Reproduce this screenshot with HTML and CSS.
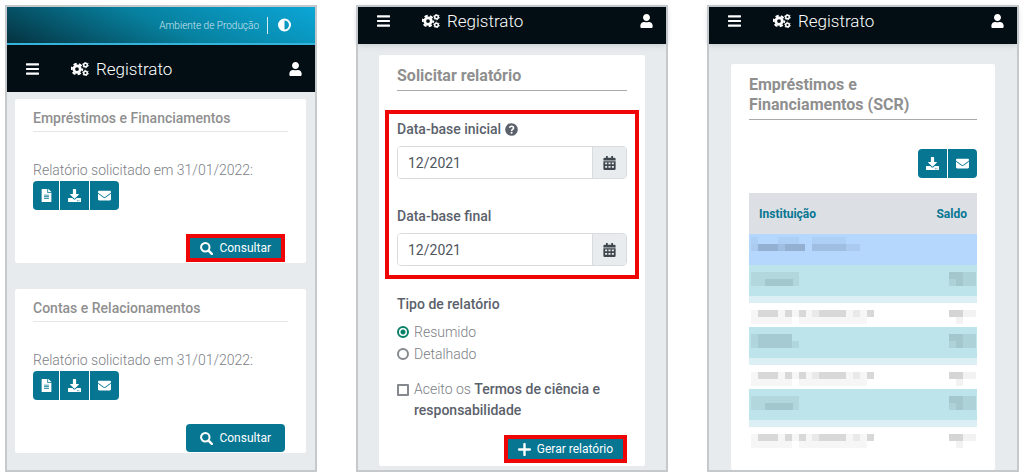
FILE: index.html
```html
<!DOCTYPE html>
<html lang="pt-BR">
<head>
    <meta charset="UTF-8">
    <title>Registrato</title>
    <meta name="viewport" content="width=device-width, initial-scale=1.0">
    <link rel="stylesheet" href="styles.css">
</head>
<body>
    <svg class="sprite" aria-hidden="true">
        <symbol id="bars" viewBox="0 36 448 440"><path d="M16 132h416c9 0 16-7 16-16V76c0-9-7-16-16-16H16C7 60 0 67 0 76v40c0 9 7 16 16 16zm0 160h416c9 0 16-7 16-16v-40c0-9-7-16-16-16H16c-9 0-16 7-16 16v40c0 9 7 16 16 16zm0 160h416c9 0 16-7 16-16v-40c0-9-7-16-16-16H16c-9 0-16 7-16 16v40c0 9 7 16 16 16z"/></symbol>
        <symbol id="user" viewBox="0 0 448 512"><path d="M224 256c71 0 128-57 128-128S295 0 224 0 96 57 96 128s57 128 128 128zm90 32h-17c-45 20-101 20-146 0h-17C60 288 0 348 0 422v42c0 26 21 48 48 48h352c27 0 48-22 48-48v-42c0-74-60-134-134-134z"/></symbol>
        <symbol id="cogs" viewBox="0 0 36 28">
            <circle cx="12" cy="14" r="6.5" fill="none" stroke="currentColor" stroke-width="5.5"/>
            <circle cx="12" cy="14" r="10.5" fill="none" stroke="currentColor" stroke-width="4" stroke-dasharray="6.4 4.6" stroke-dashoffset="2.8"/>
            <circle cx="29" cy="6" r="3.6" fill="none" stroke="currentColor" stroke-width="3"/>
            <circle cx="29" cy="6" r="5.6" fill="none" stroke="currentColor" stroke-width="2" stroke-dasharray="3 2.86"/>
            <circle cx="29" cy="22" r="3.6" fill="none" stroke="currentColor" stroke-width="3"/>
            <circle cx="29" cy="22" r="5.6" fill="none" stroke="currentColor" stroke-width="2" stroke-dasharray="3 2.86"/>
        </symbol>
        <symbol id="contrast" viewBox="1 1 14 14"><path fill-rule="evenodd" d="M8 1a7 7 0 1 0 0 14A7 7 0 0 0 8 1zm0 2.200v9.600a4.800 4.800 0 0 1 0-9.600z" transform="rotate(180 8 8)"/></symbol>
        <symbol id="file" viewBox="0 0 384 512"><path fill-rule="evenodd" d="M224 136V0H24C11 0 0 11 0 24v464c0 13 11 24 24 24h336c13 0 24-11 24-24V160H248c-13 0-24-11-24-24zm64 248H96v-32h192v32zm0-64H96v-32h192v32zm0-64H96v-32h192v32zM384 122v6H256V0h6c7 0 13 2 17 7l98 98c4 5 7 11 7 17z"/></symbol>
        <symbol id="download" viewBox="0 0 512 512"><path fill-rule="evenodd" d="M216 0h80c13 0 24 11 24 24v168h88c18 0 27 21 14 34L270 378c-7 7-20 7-27 0L90 226c-12-13-3-34 15-34h87V24c0-13 11-24 24-24zm296 376v112c0 13-11 24-24 24H24c-13 0-24-11-24-24V376c0-13 11-24 24-24h147l49 49c20 20 52 20 72 0l49-49h147c13 0 24 11 24 24zM388 464a20 20 0 1 0-40 0 20 20 0 0 0 40 0zm64 0a20 20 0 1 0-40 0 20 20 0 0 0 40 0z"/></symbol>
        <symbol id="mail" viewBox="0 0 512 512"><path d="M502 191c4-3 10 0 10 5v204c0 27-21 48-48 48H48c-26 0-48-21-48-48V196c0-5 6-8 10-5 22 17 52 39 154 114 21 15 57 48 92 48 35 0 71-33 92-48 102-75 132-97 154-114zM256 320c23 0 57-29 73-41 133-96 143-104 174-128 6-5 9-12 9-19v-20c0-26-21-48-48-48H48C22 64 0 86 0 112v20c0 7 3 14 9 19 31 24 41 32 174 128 16 12 50 41 73 41z"/></symbol>
        <symbol id="search" viewBox="0 0 16 16"><circle cx="6.500" cy="6.500" r="5.200" fill="none" stroke="currentColor" stroke-width="2.500"/><path d="M10.500 10.500l4 4" stroke="currentColor" stroke-width="3" stroke-linecap="round"/></symbol>
        <symbol id="plus" viewBox="1 1 12 12"><path d="M7 2v10M2 7h10" stroke="currentColor" stroke-width="2.200" stroke-linecap="round"/></symbol>
        <symbol id="help" viewBox="0 0 14 14"><circle cx="7" cy="7" r="6.800"/><path d="M4.800 5.200C5.300 3.900 6.100 3.500 7 3.500c1.200 0 2.200.8 2.200 1.900C9.200 6.800 7.100 6.900 7.100 8.500" fill="none" stroke="#fff" stroke-width="1.700"/><circle cx="7.100" cy="10.500" r="1.100" fill="#fff"/></symbol>
        <symbol id="calendar" viewBox="0 0 14 16"><path fill-rule="evenodd" d="M3 0h2v2h4V0h2v2h1.500A1.500 1.500 0 0 1 14 3.500V5H0V3.500A1.500 1.500 0 0 1 1.500 2H3zM0 6h14v8.500a1.500 1.500 0 0 1-1.500 1.500h-11A1.500 1.500 0 0 1 0 14.500zm2 1.500v2h2.300v-2zm3.800 0v2h2.400v-2zm3.900 0v2H12v-2zM2 11.500v2h2.300v-2zm3.800 0v2h2.400v-2zm3.900 0v2H12v-2z"/></symbol>
        <!-- redacted cells -->
        <symbol id="mask-group" viewBox="0 0 112 14"><g fill="#4a5b78"><path opacity=".06" d="M0 0h7v7H0zM27 0h21v7H27zM61 0h34v7H61z"/><path opacity=".32" d="M7 7h20v7H7zM34 7h20v7H34z"/><path opacity=".2" d="M27 7h7v7h-7zM61 7h34v7H61z"/><path opacity=".1" d="M0 7h7v7H0zM95 7h14v7H95z"/></g></symbol>
        <symbol id="mask-name" viewBox="0 0 48 14"><g fill="#4a6668"><path opacity=".09" d="M0 0h48v14H0z"/><path opacity=".14" d="M14 7h28v7H14z"/></g></symbol>
        <symbol id="mask-name-b" viewBox="0 0 48 14"><g fill="#4a6668"><path opacity=".1" d="M0 0h41v14H0zM41 7h7v7h-7z"/><path opacity=".1" d="M7 0h34v14H7z"/></g></symbol>
        <symbol id="mask-value" viewBox="0 0 27 14"><g fill="#4a6668"><path opacity=".13" d="M0 0h27v14H0z"/><path opacity=".1" d="M0 0h14v7H0zM7 7h7v7H7z"/></g></symbol>
        <symbol id="mask-detail" viewBox="0 0 124 14"><g fill="#555"><path opacity=".05" d="M0 0h48v7H0zM48 0h75v7H48zM0 7h41v7H0zM48 7h68v7H48z"/><path opacity=".18" d="M7 0h20v7H7zM34 0h7v7h-7zM48 0h7v7h-7zM68 0h27v7H68zM116 0h7v7h-7z"/><path opacity=".08" d="M61 0h7v7h-7zM102 0h7v7h-7z"/></g></symbol>
        <symbol id="mask-amount" viewBox="0 0 27 14"><g fill="#555"><path opacity=".08" d="M0 0h27v7H0zM7 7h7v7H7z"/><path opacity=".18" d="M0 0h14v7H0z"/></g></symbol>
    </svg>

    <main class="screens">
        <section class="phone">
            <div class="env">
                <span class="env-name">Ambiente de Produção</span>
                <button class="icon-btn" type="button" aria-label="Contraste"><svg class="icon"><use href="#contrast"/></svg></button>
            </div>
            <header class="topbar">
                <button class="icon-btn" type="button" aria-label="Menu"><svg class="icon"><use href="#bars"/></svg></button>
                <svg class="icon-cogs"><use href="#cogs"/></svg>
                <span class="brand">Registrato</span>
                <button class="icon-btn user" type="button" aria-label="Usuário"><svg class="icon"><use href="#user"/></svg></button>
            </header>
            <div class="list">
                <article class="card card-item">
                    <h2>Empréstimos e Financiamentos</h2>
                    <p>Relatório solicitado em 31/01/2022:</p>
                    <div class="btn-group">
                        <button type="button" aria-label="Ver"><svg class="icon"><use href="#file"/></svg></button>
                        <button type="button" aria-label="Baixar"><svg class="icon"><use href="#download"/></svg></button>
                        <button type="button" aria-label="Enviar"><svg class="icon"><use href="#mail"/></svg></button>
                    </div>
                    <button class="btn marked" type="button"><svg class="icon"><use href="#search"/></svg>Consultar</button>
                </article>
                <article class="card card-item">
                    <h2>Contas e Relacionamentos</h2>
                    <p>Relatório solicitado em 31/01/2022:</p>
                    <div class="btn-group">
                        <button type="button" aria-label="Ver"><svg class="icon"><use href="#file"/></svg></button>
                        <button type="button" aria-label="Baixar"><svg class="icon"><use href="#download"/></svg></button>
                        <button type="button" aria-label="Enviar"><svg class="icon"><use href="#mail"/></svg></button>
                    </div>
                    <button class="btn" type="button"><svg class="icon"><use href="#search"/></svg>Consultar</button>
                </article>
            </div>
        </section>

        <section class="phone">
            <header class="topbar scrolled">
                <button class="icon-btn" type="button" aria-label="Menu"><svg class="icon"><use href="#bars"/></svg></button>
                <svg class="icon-cogs"><use href="#cogs"/></svg>
                <span class="brand">Registrato</span>
                <button class="icon-btn user" type="button" aria-label="Usuário"><svg class="icon"><use href="#user"/></svg></button>
            </header>
            <form class="card card-form">
                <h1>Solicitar relatório</h1>
                <div class="dates">
                    <label for="inicio">Data-base inicial <svg class="icon-help"><use href="#help"/></svg></label>
                    <div class="input-group">
                        <input id="inicio" type="text" value="12/2021">
                        <button type="button" aria-label="Calendário"><svg class="icon"><use href="#calendar"/></svg></button>
                    </div>
                    <label for="fim">Data-base final</label>
                    <div class="input-group">
                        <input id="fim" type="text" value="12/2021">
                        <button type="button" aria-label="Calendário"><svg class="icon"><use href="#calendar"/></svg></button>
                    </div>
                </div>
                <fieldset>
                    <legend>Tipo de relatório</legend>
                    <label class="check"><input type="radio" name="tipo" checked>Resumido</label>
                    <label class="check"><input type="radio" name="tipo">Detalhado</label>
                </fieldset>
                <label class="check terms"><input type="checkbox"><span>Aceito os <strong>Termos de ciência e responsabilidade</strong></span></label>
                <button class="btn marked" type="button"><svg class="icon"><use href="#plus"/></svg>Gerar relatório</button>
            </form>
        </section>

        <section class="phone">
            <header class="topbar scrolled">
                <button class="icon-btn" type="button" aria-label="Menu"><svg class="icon"><use href="#bars"/></svg></button>
                <svg class="icon-cogs"><use href="#cogs"/></svg>
                <span class="brand">Registrato</span>
                <button class="icon-btn user" type="button" aria-label="Usuário"><svg class="icon"><use href="#user"/></svg></button>
            </header>
            <div class="card card-report">
                <h1>Empréstimos e<br>Financiamentos (SCR)</h1>
                <div class="btn-group">
                    <button type="button" aria-label="Baixar"><svg class="icon"><use href="#download"/></svg></button>
                    <button type="button" aria-label="Enviar"><svg class="icon"><use href="#mail"/></svg></button>
                </div>
                <table>
                    <thead>
                        <tr><th>Instituição</th><th>Saldo</th></tr>
                    </thead>
                    <tbody>
                        <tr class="group"><td colspan="2"><svg class="mask w-group"><use href="#mask-group"/></svg></td></tr>
                        <tr class="bank"><td><svg class="mask w-name"><use href="#mask-name"/></svg></td><td><svg class="mask w-value"><use href="#mask-value"/></svg></td></tr>
                        <tr class="detail"><td><svg class="mask w-detail"><use href="#mask-detail"/></svg></td><td><svg class="mask w-value"><use href="#mask-amount"/></svg></td></tr>
                        <tr class="bank"><td><svg class="mask w-name"><use href="#mask-name-b"/></svg></td><td><svg class="mask w-value"><use href="#mask-value"/></svg></td></tr>
                        <tr class="detail"><td><svg class="mask w-detail"><use href="#mask-detail"/></svg></td><td><svg class="mask w-value"><use href="#mask-amount"/></svg></td></tr>
                        <tr class="bank"><td><svg class="mask w-name"><use href="#mask-name"/></svg></td><td><svg class="mask w-value"><use href="#mask-value"/></svg></td></tr>
                        <tr class="detail"><td><svg class="mask w-detail"><use href="#mask-detail"/></svg></td><td><svg class="mask w-value"><use href="#mask-amount"/></svg></td></tr>
                    </tbody>
                </table>
            </div>
        </section>
    </main>
</body>
</html>
```
FILE: styles.css
```css
* {
    box-sizing: border-box;
}
body {
    margin: 0;
    padding: 5px;
    background: #fff;
    color: #7c8086;
    font: 300 14px/20px Roboto, "Liberation Sans", sans-serif;
}
h1, h2, p, fieldset, legend {
    margin: 0;
    padding: 0;
    border: 0;
}
button, input {
    font: inherit;
    margin: 0;
}
svg {
    display: block;
    fill: currentColor;
}
.sprite {
    display: none;
}
.icon {
    width: 13px;
    height: 13px;
}
.screens {
    display: grid;
    grid-template-columns: repeat(auto-fit, minmax(300px, 1fr));
    gap: 39px;
}
.phone {
    display: flex;
    flex-direction: column;
    border: 2px solid #c6c9cb;
    background: #e7ebee;
}

/* top bars */
.env {
    display: flex;
    align-items: center;
    justify-content: flex-end;
    height: 38px;
    padding-right: 24px;
    border-bottom: 2px solid #35b3da;
    background: linear-gradient(25deg, #053240 0%, #07809e 50%, #0ba6d6 100%);
    color: #cfe6ee;
    font-size: 10px;
}
.env-name {
    padding-right: 8px;
    border-right: 1px solid #d5ecf3;
    line-height: 17px;
}
.env .icon-btn {
    margin-left: 10px;
}
.icon-btn {
    padding: 0;
    border: 0;
    background: none;
    color: #fff;
}
.icon-btn .icon {
    width: 13px;
    height: 14px;
}
.topbar {
    display: flex;
    align-items: center;
    height: 47px;
    padding: 0 13px 0 19px;
    background: #020e14;
    color: #fff;
}
.topbar.scrolled {
    height: 37px;
    padding-bottom: 9px;
    box-shadow: 0 1px 6px #c3c8cc;
}
.icon-cogs {
    width: 18px;
    height: 14px;
    margin: 0 7px 0 32px;
}
.brand {
    font-size: 17px;
}
.user {
    margin-left: auto;
}

/* cards */
.card {
    display: flex;
    flex-direction: column;
    align-items: flex-start;
    border-radius: 2px;
    background: #fff;
}
.list {
    display: grid;
    gap: 26px;
    padding: 7px 9px 16px 8px;
}
.card-item {
    padding: 9px 18px 1px;
}
h1, h2 {
    align-self: stretch;
    color: #8f8f8f;
}
h2 {
    padding-bottom: 3px;
    border-bottom: 1px solid #e4e6e8;
    font-size: 14px;
    font-weight: 500;
}
h1 {
    padding-bottom: 4px;
    border-bottom: 1px solid #a9a9a9;
    font-size: 16px;
    font-weight: 700;
}
.card-item p {
    margin: 28px 0 1px;
}
.btn-group {
    display: flex;
    gap: 1px;
    border-radius: 4px;
    overflow: hidden;
}
.btn-group button {
    display: flex;
    align-items: center;
    justify-content: center;
    width: 29px;
    height: 29px;
    padding: 0;
    border: 0;
    background: #067693;
    color: #fff;
}
.card-item .btn-group button:first-child {
    width: 26px;
}
.btn {
    display: flex;
    align-items: center;
    align-self: flex-end;
    gap: 6px;
    height: 28px;
    padding: 0 14px;
    border: 0;
    border-radius: 4px;
    background: #067693;
    color: #fff;
    font-size: 12px;
    font-weight: 400;
}
.btn.marked {
    padding: 0 10px;
    border: 4px solid #f00505;
    border-radius: 0;
}
.card-item .btn {
    margin: 24px 3px 0 0;
}

/* form */
.card-form {
    margin: 11px 21px 4px;
    padding: 11px 18px 3px;
}
.dates {
    align-self: stretch;
    margin: 19px -12px 15px;
    padding: 5px 8px 9px;
    border: 4px solid #f00505;
}
.dates label, legend, strong {
    color: #5b616b;
    font-weight: 500;
}
.dates label {
    display: flex;
    align-items: center;
    gap: 4px;
    margin-bottom: 7px;
}
.icon-help {
    width: 13px;
    height: 13px;
}
.input-group {
    display: flex;
    height: 33px;
    border: 1px solid #d8dcdf;
    border-radius: 4px;
    overflow: hidden;
}
.input-group + label {
    margin-top: 27px;
}
.input-group input {
    flex: 1;
    min-width: 0;
    padding: 0 10px;
    border: 0;
    background: #fff;
    color: #50565d;
    font-weight: 400;
}
.input-group button {
    display: flex;
    align-items: center;
    justify-content: center;
    width: 34px;
    padding: 0;
    border: 0;
    border-left: 1px solid #d8dcdf;
    background: #e9ecef;
    color: #3f464d;
}
.input-group .icon {
    height: 14px;
}
legend {
    margin-bottom: 7px;
}
.check {
    display: flex;
    gap: 5px;
    line-height: 22px;
}
.check input {
    flex: none;
    appearance: none;
    width: 12px;
    height: 12px;
    margin-top: 5px;
    border: 2px solid #85888c;
}
.check input[type="radio"] {
    border-radius: 50%;
}
.check input[type="radio"]:checked {
    border-color: #0b8068;
    background: radial-gradient(circle, #0b8068 2px, #fff 3px);
}
.terms {
    margin: 14px 0;
    line-height: 21px;
}
.terms input {
    border-radius: 1px;
}

/* report */
.card-report {
    flex: 1;
    margin: 20px 22px 0;
    padding: 11px 18px 0;
}
.card-report .btn-group {
    align-self: flex-end;
    margin: 29px 0 15px;
}
table {
    align-self: stretch;
    border-collapse: collapse;
}
th {
    height: 41px;
    padding: 0 10px;
    background: #dcdfe4;
    color: #067693;
    font-size: 12px;
    font-weight: 700;
    text-align: left;
}
th:last-child {
    text-align: right;
}
td {
    padding: 7px 1px 0 2px;
    vertical-align: top;
}
td:last-child .w-value {
    margin-left: auto;
}
.group td {
    height: 31px;
    padding-top: 3px;
    background: #b5d7fd;
}
.bank td {
    height: 34px;
    border-bottom: 7px solid #dceff4;
    background: #bce4ea;
}
.detail td {
    height: 28px;
}
.mask {
    height: 14px;
}
.w-group {
    width: 112px;
}
.w-name {
    width: 48px;
}
.w-detail {
    width: 124px;
}
.w-value {
    width: 27px;
}
```
